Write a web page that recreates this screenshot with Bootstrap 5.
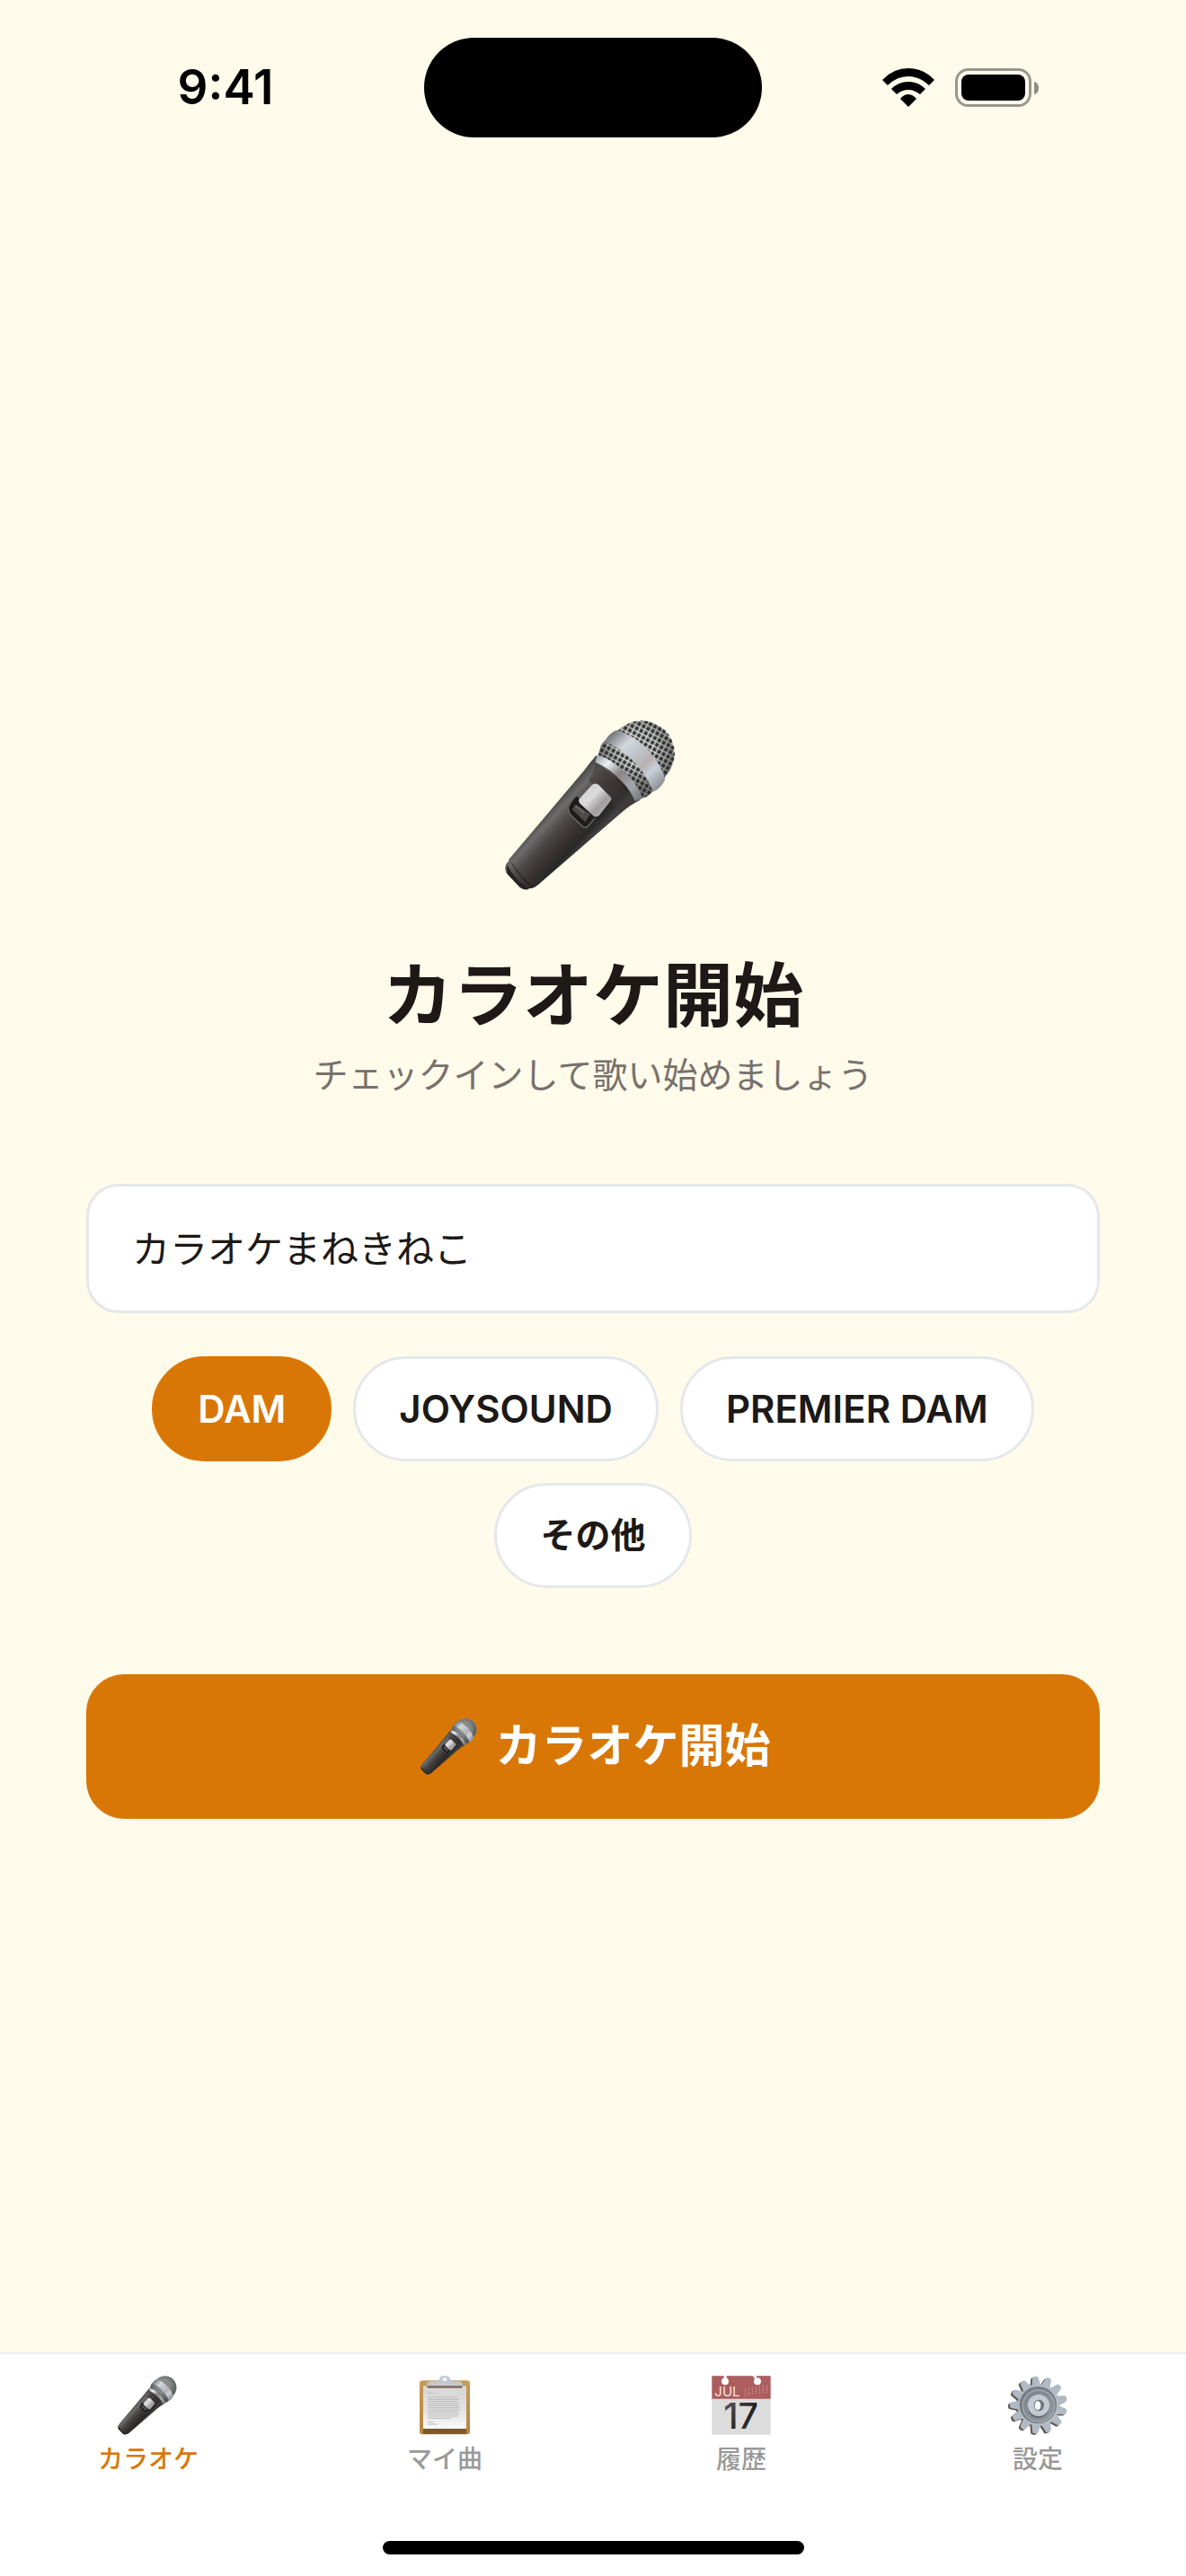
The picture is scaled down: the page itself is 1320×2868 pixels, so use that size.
<!DOCTYPE html>
<html lang="ja">
<head>
<meta charset="utf-8">
<meta name="viewport" content="width=device-width, initial-scale=1">
<title>カラオケ開始</title>
<link href="https://cdn.jsdelivr.net/npm/bootstrap@5.3.0/dist/css/bootstrap.min.css" rel="stylesheet">
<style>
  body { background: #fffbeb; color: #1c1917; font-family: Inter, "Noto Sans CJK JP", sans-serif; }
  svg { display: block; }
  .status-bar { height: 185px; padding-top: 9px; }
  .status-side { flex: 1 1 0; }
  .status-left { padding-left: 30px; }
  .status-right { padding-right: 30px; gap: 23px; }
  .clock { font-size: 53px; font-weight: 600; line-height: 64px; color: #000; }
  .island { width: 376px; height: 111px; background: #000; }
  .page-main { padding: 0 96px; }
  .hero-icon { height: 229px; padding-top: 23px; margin-bottom: 48px; }
  .page-title { font-size: 78px; line-height: 106px; font-weight: 700; }
  .page-sub { font-size: 39px; line-height: 70px; color: #78716c; margin-bottom: 86px; }
  .shop-input, .shop-input:focus { height: 144px; border: 3px solid #e5e7eb; border-radius: 36px; padding: 0 48px 6px; font-size: 42px; color: #1c1917; background: #fff; }
  .chip-list { gap: 24px; margin: 48px 0 96px; }
  .chip { --bs-btn-color: #1c1917; --bs-btn-bg: #fff; --bs-btn-border-color: #e5e7eb; --bs-btn-border-width: 3px; --bs-btn-border-radius: 60px;
    --bs-btn-padding-x: 48px; --bs-btn-padding-y: 0; --bs-btn-font-weight: 600; --bs-btn-font-size: 42px;
    --bs-btn-active-color: #fff; --bs-btn-active-bg: #d97706; --bs-btn-active-border-color: #d97706; height: 117px; }
  .chip-ja { --bs-btn-font-size: 39px; }
  .start-btn { --bs-btn-color: #fff; --bs-btn-bg: #d97706; --bs-btn-border-color: #d97706; --bs-btn-border-radius: 42px; --bs-btn-font-size: 51px; --bs-btn-font-weight: 700;
    --bs-btn-hover-color: #fff; --bs-btn-hover-bg: #b45309; height: 161px; gap: 18px; padding-left: 18px; }
  .tab-bar { height: 249px; border-top: 2px solid #ececec; padding: 24px 0; }
  .tab-link { color: #999; font-size: 28px; line-height: 36px; font-weight: 500; gap: 9px; }
  .tab-link.active { color: #d97706; }
  .home-bar { width: 469px; height: 15px; background: #000; }
</style>
<script src="https://cdn.jsdelivr.net/npm/bootstrap@5.3.0/dist/js/bootstrap.bundle.min.js"></script>
</head>
<body class="d-flex flex-column min-vh-100">

<svg width="0" height="0" class="position-absolute" aria-hidden="true">
  <defs>
    <linearGradient id="micBody" gradientUnits="userSpaceOnUse" x1="220" y1="355" x2="345" y2="470">
      <stop offset="0" stop-color="#4c4c4a"/><stop offset=".16" stop-color="#6d6c6a"/><stop offset=".36" stop-color="#4d4b4a"/><stop offset=".6" stop-color="#3a3434"/><stop offset=".85" stop-color="#282927"/><stop offset="1" stop-color="#414240"/>
    </linearGradient>
    <linearGradient id="micBand" gradientUnits="userSpaceOnUse" x1="415" y1="110" x2="590" y2="290">
      <stop offset="0" stop-color="#6f7274"/><stop offset=".25" stop-color="#d3d8df"/><stop offset=".42" stop-color="#bfc5cc"/><stop offset=".62" stop-color="#b9b1b3"/><stop offset=".75" stop-color="#c8cfd7"/><stop offset="1" stop-color="#83878a"/>
    </linearGradient>
    <linearGradient id="micRing" gradientUnits="userSpaceOnUse" x1="370" y1="190" x2="515" y2="330">
      <stop offset="0" stop-color="#a5a9ad"/><stop offset=".2" stop-color="#edf1f5"/><stop offset=".45" stop-color="#8b8586"/><stop offset=".75" stop-color="#a3a8ad"/><stop offset="1" stop-color="#74797c"/>
    </linearGradient>
    <linearGradient id="micSwitch" x1="0" y1="0" x2="1" y2="1">
      <stop offset="0" stop-color="#c9cacc"/><stop offset=".4" stop-color="#dcdcdf"/><stop offset=".65" stop-color="#a29c9d"/><stop offset="1" stop-color="#c0c2c5"/>
    </linearGradient>
    <radialGradient id="micShade" gradientUnits="userSpaceOnUse" cx="505" cy="160" r="132">
      <stop offset=".45" stop-color="#222" stop-opacity="0"/><stop offset="1" stop-color="#222" stop-opacity=".5"/>
    </radialGradient>
    <pattern id="micMesh" width="17" height="17" patternUnits="userSpaceOnUse" patternTransform="rotate(28)">
      <rect width="17" height="17" fill="#343633"/>
      <path d="M0 5H17M5 0V17" stroke="#c9cbcb" stroke-width="5"/>
      <path d="M0 4H11M4 8V17" stroke="#f0f1f1" stroke-width="2"/>
      <path d="M9 8H17M8 0V4" stroke="#77797a" stroke-width="2"/>
    </pattern>
    <symbol id="mic" viewBox="66 65 587 566">
      <path d="M74 540 68 556Q66 568 76 580L116 622Q136 636 148 625L160 624 90 535Z" fill="#252423"/>
      <path d="M76 540Q66 552 72 570" fill="none" stroke="#666461" stroke-width="5"/>
      <path d="M80 528 330 232Q350 205 370 182L518 330Q485 346 455 372L176 614Q158 631 136 620 97 594 74 548Z" fill="url(#micBody)"/>
      <path d="M372 200 505 336Q475 345 452 374L395 317 345 265Q360 240 372 200Z" fill="#3d3635" opacity=".55"/>
      <path d="M88 540Q115 585 155 618" fill="none" stroke="#1b1b1a" stroke-width="5" opacity=".5"/>
      <path d="M376 184 386 148Q396 130 412 128L568 292Q545 322 519 326Z" fill="url(#micMesh)"/>
      <circle cx="522" cy="176" r="110" fill="url(#micMesh)"/>
      <path d="M376 184 386 148Q396 130 412 128L437 103A110 110 0 1 1 598 255L568 292Q545 322 519 326Z" fill="url(#micShade)"/>
      <path d="M437 98Q414 108 397 136 450 154 500 207 543 255 560 304 586 292 600 262 588 210 532 151 484 108 437 98Z" fill="url(#micBand)"/>
      <path d="M378 181Q368 190 368 205 417 226 456 269 487 302 499 334 516 333 524 320 502 271 462 233 420 195 378 181Z" fill="url(#micRing)"/>
      <path d="M306 318Q290 330 278 360 277 372 286 382L326 420Q336 426 345 415L370 386Z" fill="#1d1c1b"/>
      <path d="M278 360Q277 372 286 382L326 420Q336 426 345 415L370 386" fill="none" stroke="#6f6e6c" stroke-width="4"/>
      <path d="M302 345 350 378 334 404 290 362Z" fill="#4b4a48"/>
      <path d="M300 350 330 374" stroke="#838280" stroke-width="3"/>
      <path d="M357 280Q367 272 378 280L418 320Q424 330 418 340L382 382Q370 390 361 384L316 342Q308 333 316 324Z" fill="url(#micSwitch)"/>
      <path d="M424 330 382 384Q370 394 358 386" fill="none" stroke="#242423" stroke-width="5"/>
    </symbol>
    <linearGradient id="paper" x1="0" y1="0" x2="0" y2="1"><stop offset="0" stop-color="#d6d6d6"/><stop offset=".6" stop-color="#e3e3e3"/><stop offset="1" stop-color="#fafafa"/></linearGradient>
    <linearGradient id="wood" x1="0" y1="0" x2="0" y2="1"><stop offset="0" stop-color="#c79c55"/><stop offset="1" stop-color="#b78442"/></linearGradient>
    <linearGradient id="gearFace" gradientUnits="userSpaceOnUse" x1="-70" y1="-70" x2="70" y2="70"><stop offset="0" stop-color="#aeb8c1"/><stop offset="1" stop-color="#bdbfc8"/></linearGradient>
    <linearGradient id="digits" x1="0" y1="0" x2="1" y2="1"><stop offset="0" stop-color="#666"/><stop offset=".6" stop-color="#222"/><stop offset="1" stop-color="#555"/></linearGradient>
    <path id="tooth" d="M-15-66-10-90Q-9-96-4-96H4Q9-96 10-90L15-66Z"/>
    <g id="cog">
      <circle r="70"/>
      <use href="#tooth" transform="rotate(-7)"/><use href="#tooth" transform="rotate(21)"/><use href="#tooth" transform="rotate(48)"/><use href="#tooth" transform="rotate(76)"/><use href="#tooth" transform="rotate(104)"/><use href="#tooth" transform="rotate(131)"/><use href="#tooth" transform="rotate(159)"/><use href="#tooth" transform="rotate(187)"/><use href="#tooth" transform="rotate(215)"/><use href="#tooth" transform="rotate(242)"/><use href="#tooth" transform="rotate(270)"/><use href="#tooth" transform="rotate(298)"/><use href="#tooth" transform="rotate(325)"/>
    </g>
  </defs>
</svg>

<header class="status-bar d-flex align-items-center">
  <div class="status-side status-left d-flex justify-content-center"><time class="clock">9:41</time></div>
  <div class="island rounded-pill"></div>
  <div class="status-side status-right d-flex justify-content-center align-items-center">
    <svg width="58" height="43" viewBox="0 0 58 43" role="img" aria-label="Wi-Fi">
      <path d="M0 13Q12 0 29 0T58 13L52 19Q42 9 29 9T6 19Z"/>
      <path d="M10 23Q18 15 29 15T48 23L42 29Q36 24 29 24T16 29Z"/>
      <path d="M20 34Q24 29 29 29T38 34L29 43Z"/>
    </svg>
    <svg width="94" height="43" viewBox="0 0 94 43" role="img" aria-label="バッテリー">
      <rect x="1.500" y="1.500" width="82" height="40" rx="13" fill="none" stroke="#99978d" stroke-width="3"/>
      <rect x="7" y="7" width="71" height="29" rx="8"/>
      <path d="M88 15Q93 16 93 22T88 29Z" fill="#8f8d84"/>
    </svg>
  </div>
</header>

<main class="page-main flex-grow-1 d-flex flex-column justify-content-center text-center">
  <div class="hero-icon d-flex justify-content-center">
    <svg width="196" height="189" role="img" aria-label="マイク"><use href="#mic"/></svg>
  </div>
  <h1 class="page-title mb-0">カラオケ開始</h1>
  <p class="page-sub">チェックインして歌い始めましょう</p>
  <form>
    <input class="form-control shop-input" type="text" value="カラオケまねきねこ" aria-label="店舗名">
    <div class="chip-list d-flex flex-wrap justify-content-center">
      <button type="button" class="btn chip active" aria-pressed="true">DAM</button>
      <button type="button" class="btn chip" aria-pressed="false">JOYSOUND</button>
      <button type="button" class="btn chip" aria-pressed="false">PREMIER DAM</button>
      <button type="button" class="btn chip chip-ja" aria-pressed="false">その他</button>
    </div>
    <button type="submit" class="btn start-btn w-100 d-flex justify-content-center align-items-center">
      <svg width="65" height="63" aria-hidden="true"><use href="#mic"/></svg>
      <span>カラオケ開始</span>
    </button>
  </form>
</main>

<footer class="tab-bar bg-white d-flex flex-column justify-content-between align-items-center">
  <nav class="w-100">
    <div class="row g-0">
      <a href="#karaoke" class="col tab-link active text-decoration-none d-flex flex-column align-items-center" aria-current="page">
        <svg width="68" height="66" aria-hidden="true"><use href="#mic"/></svg>
        <span>カラオケ</span>
      </a>
      <a href="#songs" class="col tab-link text-decoration-none d-flex flex-column align-items-center">
        <svg width="66" height="66" viewBox="0 0 198 198" aria-hidden="true">
          <rect x="15" y="16" width="168" height="180" rx="10" fill="url(#wood)"/>
          <path d="M27 176H171V194H27Z" fill="#7d562d"/>
          <path d="M27 34H171V177H27Z" fill="url(#paper)"/>
          <path d="M42 57H62M42 72H142M42 79H146M42 86H142M42 93H149M42 100H146M42 107H150M42 114H148M42 121H144M42 128H149M42 135H144M42 142H120M42 155H62M42 162H76" stroke="#b9b9b9" stroke-width="3"/>
          <path d="M66 20Q82 16 83 6 86 0 99 0T115 6Q116 16 132 20Z" fill="#b9cbdc"/>
          <circle cx="99" cy="13" r="13" fill="#c6ced7"/><circle cx="99" cy="12" r="6" fill="#fff"/>
          <path d="M39 30Q40 19 52 19H146Q158 19 159 30V36H39Z" fill="#c5c8cc"/>
          <path d="M39 34H159Q159 41 154 41H44Q39 41 39 34Z" fill="#806b5e"/>
        </svg>
        <span>マイ曲</span>
      </a>
      <a href="#history" class="col tab-link text-decoration-none d-flex flex-column align-items-center">
        <svg width="66" height="66" viewBox="0 0 198 198" aria-hidden="true">
          <path d="M1 1H197V197H1Z" fill="#dcdcdc"/>
          <path d="M1 1H197V77H1Z" fill="#ac5d5d"/>
          <path d="M41 0H50V12H41ZM137 0 146 12H150V0Z" fill="#fff"/>
          <circle cx="45" cy="19" r="12" fill="#fff"/><circle cx="153" cy="19" r="12" fill="#fff"/>
          <path d="M112 42V68M124 40V68M136 38V66M148 36V64M160 34V60M172 32V60M185 32V58" stroke="#c98f8f" stroke-width="4" stroke-dasharray="4 3"/>
          <text x="10" y="68" font-family="Inter, sans-serif" font-size="45" font-weight="400" fill="#f3e3e3">JUL</text>
          <text x="98" y="177" text-anchor="middle" font-family="Inter, sans-serif" font-size="118" font-weight="500" fill="url(#digits)">17</text>
        </svg>
        <span>履歴</span>
      </a>
      <a href="#settings" class="col tab-link text-decoration-none d-flex flex-column align-items-center">
        <svg width="66" height="66" viewBox="0 0 198 198" aria-hidden="true">
          <use href="#cog" transform="translate(96 102)" fill="#5d5a57"/>
          <use href="#cog" transform="translate(102 98)" fill="url(#gearFace)"/>
          <circle cx="100" cy="98" r="62" fill="#747c83"/>
          <circle cx="102" cy="101" r="56" fill="#9ba2a8"/>
          <circle cx="101" cy="100" r="49" fill="#7f878e"/>
          <circle cx="103" cy="104" r="43" fill="#8e969d"/>
          <circle cx="101" cy="106" r="36" fill="#666c73"/>
          <circle cx="102" cy="99" r="36" fill="#c3cad2"/>
          <ellipse cx="103" cy="99" rx="17" ry="19" fill="#6d747c"/>
          <ellipse cx="99" cy="100" rx="10" ry="15" fill="#fff"/>
        </svg>
        <span>設定</span>
      </a>
    </div>
  </nav>
  <div class="home-bar rounded-pill"></div>
</footer>
</body>
</html>
